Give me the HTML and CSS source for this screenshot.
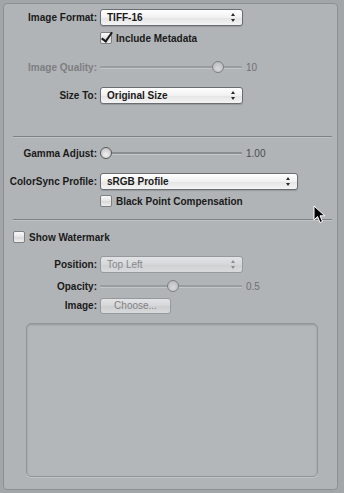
FILE: index.html
```html
<!DOCTYPE html>
<html lang="en">
<head>
  <meta charset="UTF-8">
  <title>Export Options</title>
  <link rel="stylesheet" href="styles.css">
</head>
<body>
<div class="panel">
  <div class="row r-format">
    <span class="label">Image Format:</span>
    <div class="popup w-short"><span>TIFF-16</span><i class="arrows"></i></div>
  </div>
  <div class="row r-meta">
    <span></span>
    <label class="check"><span class="box checked"></span>Include Metadata</label>
  </div>
  <div class="row r-quality">
    <span class="label disabled">Image Quality:</span>
    <div class="slider disabled">
      <div class="track"><span class="knob" style="left: 112px"></span></div>
      <span class="value">10</span>
    </div>
  </div>
  <div class="row r-size">
    <span class="label">Size To:</span>
    <div class="popup w-short"><span>Original Size</span><i class="arrows"></i></div>
  </div>

  <div class="sep s-one"></div>

  <div class="row r-gamma">
    <span class="label">Gamma Adjust:</span>
    <div class="slider">
      <div class="track"><span class="knob" style="left: 0px"></span></div>
      <span class="value">1.00</span>
    </div>
  </div>
  <div class="row r-profile">
    <span class="label">ColorSync Profile:</span>
    <div class="popup w-long"><span>sRGB Profile</span><i class="arrows"></i></div>
  </div>
  <div class="row r-black">
    <span></span>
    <label class="check"><span class="box"></span>Black Point Compensation</label>
  </div>

  <div class="sep s-two"></div>

  <label class="check watermark"><span class="box"></span>Show Watermark</label>

  <div class="row r-position">
    <span class="label">Position:</span>
    <div class="popup w-short disabled"><span>Top Left</span><i class="arrows"></i></div>
  </div>
  <div class="row r-opacity">
    <span class="label">Opacity:</span>
    <div class="slider disabled">
      <div class="track"><span class="knob" style="left: 67px"></span></div>
      <span class="value">0.5</span>
    </div>
  </div>
  <div class="row r-image">
    <span class="label">Image:</span>
    <div class="button disabled">Choose...</div>
  </div>

  <div class="well"></div>

  <svg class="cursor" width="13" height="19" viewBox="0 0 13 19">
    <path d="M1 1 L1 15 L4.5 11.5 L7 17.5 L9.5 16.5 L7 10.8 L11.8 10.8 Z" fill="#000" stroke="#fff" stroke-width="1"/>
  </svg>
</div>
</body>
</html>
```

FILE: styles.css
```css
body {
  margin: 0;
  background: #a3a6a9;
  font-family: 'Liberation Sans', Arial, sans-serif;
  font-size: 10px;
  color: #1a1a1a;
}

.panel {
  position: relative;
  box-sizing: border-box;
  margin: 3px 0 0 3px;
  width: 335px;
  height: 487px;
  border: 1px solid #8d9093;
  border-radius: 4px;
  background: #b1b4b7;
  padding-top: 5px;
}

.row {
  display: grid;
  grid-template-columns: 93px auto;
  column-gap: 3px;
  align-items: center;
}

.label {
  text-align: right;
  font-weight: bold;
  white-space: nowrap;
}

.label.disabled {
  color: #7c7f82;
}

.r-format { height: 17px; }
.r-meta { height: 14px; margin-top: 5px; }
.r-quality { height: 14px; margin-top: 15px; }
.r-size { height: 17px; margin-top: 13px; }
.r-gamma { height: 14px; margin-top: 8px; }
.r-profile { height: 17px; margin-top: 13px; }
.r-black { height: 14px; margin-top: 4px; }
.r-position { height: 17px; margin-top: 12px; }
.r-opacity { height: 14px; margin-top: 6px; }
.r-image { height: 17px; margin-top: 4px; }

/* popup buttons */
.popup {
  position: relative;
  box-sizing: border-box;
  height: 17px;
  border: 1px solid #6b6e71;
  border-radius: 3px;
  background: linear-gradient(#ffffff, #f1f1f1 50%, #e4e4e4 51%, #f4f4f4);
  box-shadow: 0 1px 1px rgba(0, 0, 0, 0.15);
  font-weight: bold;
  line-height: 15px;
  padding-left: 6px;
}

.w-short { width: 143px; }
.w-long { width: 198px; }

.popup .arrows {
  position: absolute;
  right: 6px;
  top: 3px;
  width: 5px;
  height: 9px;
}

.popup .arrows::before,
.popup .arrows::after {
  content: "";
  position: absolute;
  left: 0;
  border-left: 2.5px solid transparent;
  border-right: 2.5px solid transparent;
}

.popup .arrows::before {
  top: 0;
  border-bottom: 3px solid #2a2a2a;
}

.popup .arrows::after {
  bottom: 0;
  border-top: 3px solid #2a2a2a;
}

.popup.disabled {
  border-color: #96999c;
  background: linear-gradient(#e2e3e4, #d6d7d8 50%, #cfd0d1 51%, #d9dadb);
  color: #85888b;
  font-weight: normal;
  box-shadow: none;
}

.popup.disabled .arrows::before { border-bottom-color: #8a8d90; }
.popup.disabled .arrows::after { border-top-color: #8a8d90; }

.button {
  box-sizing: border-box;
  width: 71px;
  height: 16px;
  border: 1px solid #96999c;
  border-radius: 3px;
  background: linear-gradient(#e2e3e4, #d5d6d7 50%, #cdcecf 51%, #d8d9da);
  text-align: center;
  line-height: 14px;
  color: #7f8285;
}

/* checkboxes */
.check {
  display: flex;
  align-items: center;
  gap: 4px;
  font-weight: bold;
  white-space: nowrap;
}

.box {
  position: relative;
  box-sizing: border-box;
  width: 12px;
  height: 12px;
  border: 1px solid #7e8184;
  border-radius: 2px;
  background: linear-gradient(#fafafa, #e4e4e4 50%, #d8d8d8 51%, #eeeeee);
}

.box.checked::after {
  content: "";
  position: absolute;
  left: 3px;
  top: -3px;
  width: 4px;
  height: 10px;
  border-right: 2px solid #1a1a1a;
  border-bottom: 2px solid #1a1a1a;
  transform: rotate(35deg);
}

.watermark {
  margin: 9px 0 0 9px;
  height: 14px;
}

/* sliders */
.slider {
  display: flex;
  align-items: center;
  gap: 4px;
}

.track {
  position: relative;
  width: 142px;
  height: 2px;
  background: #8a8d90;
  border-bottom: 1px solid #c4c7ca;
  border-radius: 1px;
}

.knob {
  position: absolute;
  top: -5px;
  box-sizing: border-box;
  width: 12px;
  height: 12px;
  border: 1px solid #55585b;
  border-radius: 50%;
  background: radial-gradient(circle at 50% 65%, #f2f2f2, #b8b8b8);
}

.value {
  color: #4a4d50;
}

.slider.disabled .track {
  background: #9a9da0;
}

.slider.disabled .knob {
  border-color: #7d8083;
  background: radial-gradient(circle at 50% 65%, #d8d9da, #b2b4b6);
}

.slider.disabled .value {
  color: #6d7073;
}

/* separators */
.sep {
  height: 1px;
  margin: 0 5px 0 9px;
  background: #7f8285;
  border-bottom: 1px solid #c0c3c6;
}

.s-one { margin-top: 32px; }
.s-two { margin-top: 11px; }

.well {
  box-sizing: border-box;
  margin: 9px 0 0 22px;
  width: 292px;
  height: 154px;
  border: 1px solid #929598;
  border-radius: 5px;
  background: #b4b7ba;
  box-shadow: inset 0 1px 2px rgba(0, 0, 0, 0.18), 0 1px 0 #c2c5c8;
}

.cursor {
  position: absolute;
  left: 309px;
  top: 201px;
}
```
